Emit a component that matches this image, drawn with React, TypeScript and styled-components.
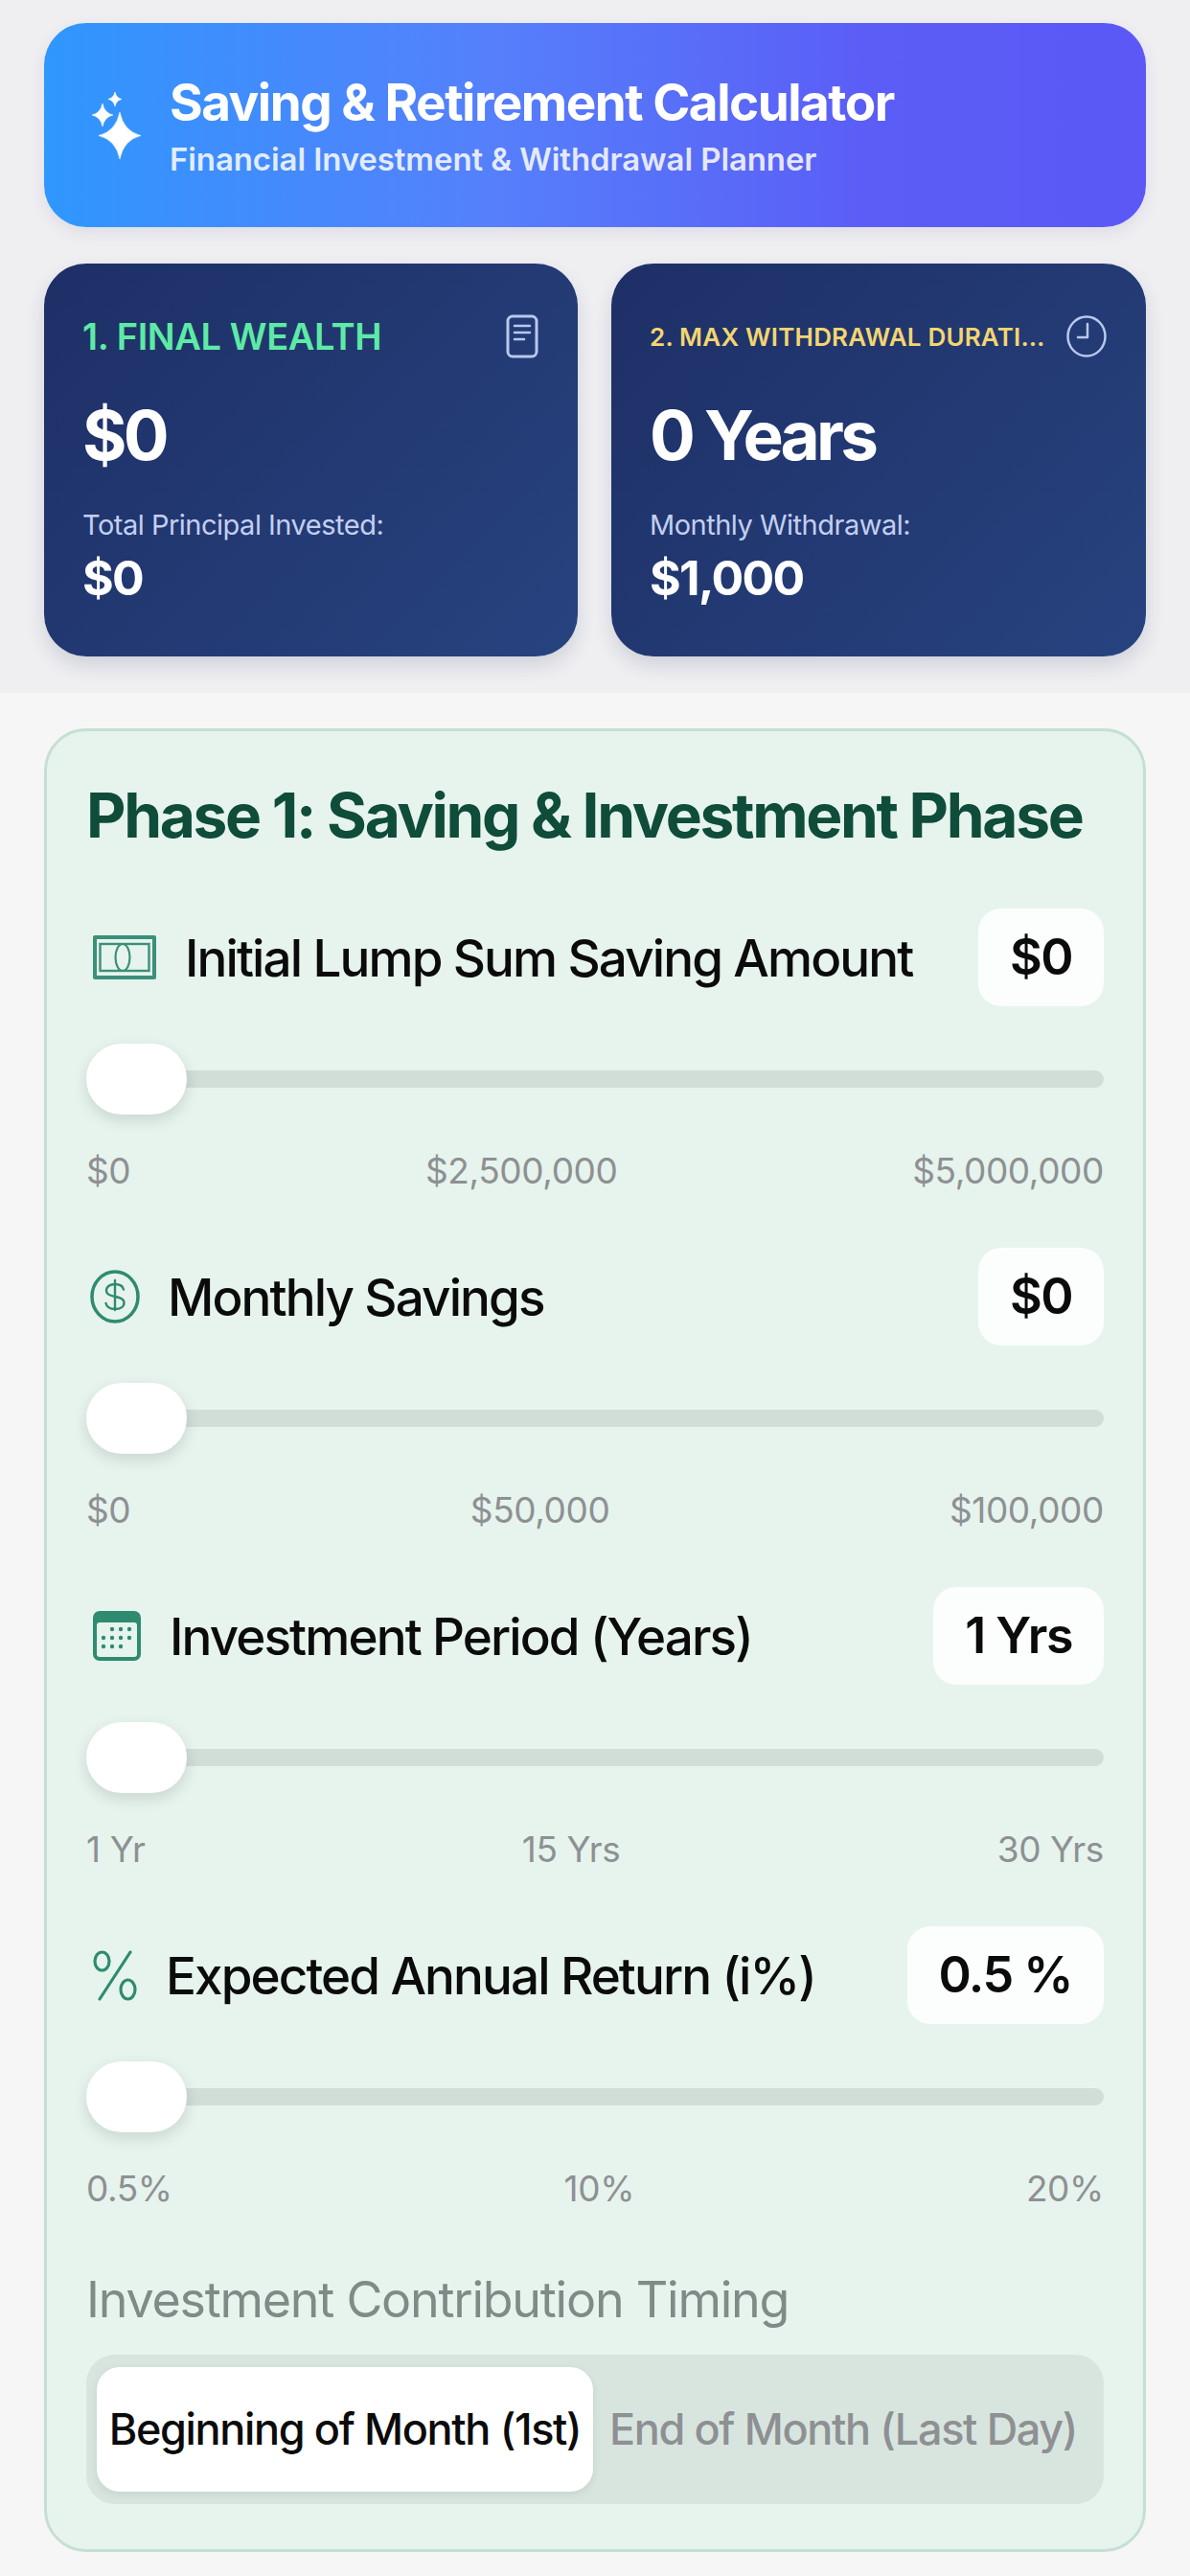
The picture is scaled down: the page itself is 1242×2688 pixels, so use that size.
import React from 'react';

import styled, { createGlobalStyle } from 'styled-components';

const GlobalStyle = createGlobalStyle`
  html, body {
    margin: 0;
    padding: 0;
    background: #f6f6f6;
    font-family: Inter, "Liberation Sans", sans-serif;
  }
  * { box-sizing: border-box; }
`;

const Page = styled.div`
  width: 1242px;
  height: 2688px;
  overflow: hidden;
`;

const Top = styled.div`
  height: 723px;
  padding: 24px 46px 0;
  background: #efeff2;
`;

const Banner = styled.div`
  display: flex;
  align-items: center;
  gap: 29px;
  height: 213px;
  padding: 0 0 0 50px;
  border-radius: 44px;
  background: linear-gradient(90deg, #2f97fd 0%, #5580fb 40%, #5b5df6 75%, #5b58f6 100%);
  box-shadow: 0 6px 16px rgba(60, 60, 120, 0.1);
`;

const BannerText = styled.div`
  display: flex;
  flex-direction: column;
  gap: 9px;
  margin-top: -1px;
`;

const BannerTitle = styled.div`
  font-size: 53px;
  line-height: 62px;
  font-weight: 700;
  letter-spacing: -1.500px;
  color: #fff;
`;

const BannerSub = styled.div`
  font-size: 33px;
  line-height: 38px;
  font-weight: 600;
  letter-spacing: -0.100px;
  color: rgba(255, 255, 255, 0.85);
`;

const Cards = styled.div`
  display: grid;
  grid-template-columns: 557px 558px;
  gap: 35px;
  margin-top: 38px;
`;

const Card = styled.div`
  height: 410px;
  padding: 52px 41px 0 40px;
  border-radius: 44px;
  background: linear-gradient(135deg, #1e2f66 0%, #27437f 100%);
  box-shadow: 0 10px 20px rgba(30, 40, 80, 0.14);
`;

const CardHead = styled.div`
  display: flex;
  align-items: center;
  justify-content: space-between;
  gap: 10px;
  height: 48px;
`;

const CardTitle = styled.div<{ $color: string; $size: number; $track: number }>`
  flex: 1;
  min-width: 0;
  overflow: hidden;
  white-space: nowrap;
  text-overflow: ellipsis;
  font-size: ${(p) => p.$size}px;
  font-weight: 600;
  letter-spacing: ${(p) => p.$track}px;
  color: ${(p) => p.$color};
`;

const CardAmount = styled.div`
  margin-top: 35px;
  font-size: 71px;
  line-height: 88px;
  font-weight: 700;
  letter-spacing: -3.800px;
  color: #fff;
`;

const CardNote = styled.div`
  margin-top: 32px;
  font-size: 29px;
  line-height: 36px;
  letter-spacing: -0.500px;
  color: #c3cff0;
`;

const CardSum = styled.div`
  margin-top: 7px;
  font-size: 50px;
  line-height: 60px;
  font-weight: 700;
  letter-spacing: -1.700px;
  color: #fff;
`;

const Panel = styled.div`
  height: 1903px;
  margin: 37px 46px 0;
  padding: 48px 41px 0;
  border: 3px solid #c6dfd3;
  border-radius: 44px;
  background: #e6f4ed;
`;

const PanelTitle = styled.div`
  font-size: 64px;
  line-height: 80px;
  font-weight: 700;
  letter-spacing: -2.300px;
  color: #0f4c3a;
  white-space: nowrap;
`;

const Fields = styled.div`
  display: flex;
  flex-direction: column;
  gap: 57px;
  margin-top: 57px;
`;

const FieldHead = styled.div`
  display: flex;
  align-items: center;
  height: 102px;
`;

const FieldIcon = styled.div<{ $width: number; $inset: number }>`
  display: flex;
  align-items: center;
  flex-shrink: 0;
  width: ${(p) => p.$width}px;
  padding-left: ${(p) => p.$inset}px;
`;

const FieldLabel = styled.div`
  flex: 1;
  padding-top: 2px;
  font-size: 53px;
  font-weight: 550;
  letter-spacing: -1.900px;
  color: #0b0b0b;
  white-space: nowrap;
`;

const ValueBox = styled.div`
  padding: 0 33px;
  height: 102px;
  line-height: 102px;
  border-radius: 24px;
  background: rgba(255, 255, 255, 0.85);
  font-size: 52px;
  font-weight: 600;
  letter-spacing: -1.500px;
  color: #0b0b0b;
`;

const Slider = styled.div`
  position: relative;
  display: flex;
  align-items: center;
  height: 74px;
  margin-top: 39px;
`;

const Track = styled.div`
  width: 100%;
  height: 18px;
  border-radius: 9px;
  background: #d1ddd7;
`;

const Thumb = styled.div`
  position: absolute;
  top: 0;
  left: 0;
  width: 105px;
  height: 74px;
  border-radius: 37px;
  background: #fff;
  box-shadow: 0 6px 16px rgba(0, 0, 0, 0.12);
`;

const Ticks = styled.div`
  display: flex;
  justify-content: space-between;
  margin-top: 36px;
  font-size: 37px;
  line-height: 46px;
  letter-spacing: -0.400px;
  color: #8e9093;
`;

const TimingLabel = styled.div`
  margin-top: 63px;
  font-size: 52px;
  line-height: 60px;
  font-weight: 400;
  letter-spacing: -1.250px;
  color: #7f8b87;
`;

const Segment = styled.div`
  display: flex;
  align-items: center;
  height: 156px;
  margin-top: 27px;
  padding: 0 11px;
  border-radius: 30px;
  background: #d8e5df;
`;

const SegmentOption = styled.div<{ $active?: boolean }>`
  flex: ${(p) => (p.$active ? '0 0 518px' : '1')};
  height: 130px;
  line-height: 130px;
  text-align: center;
  font-size: 45px;
  font-weight: 550;
  letter-spacing: -1.350px;
  white-space: nowrap;
  border-radius: 24px;
  color: ${(p) => (p.$active ? '#0b0b0b' : '#8e9093')};
  background: ${(p) => (p.$active ? '#fff' : 'transparent')};
  box-shadow: ${(p) => (p.$active ? '0 3px 8px rgba(0,0,0,0.08)' : 'none')};
`;

const Sparkles = () => (
  <svg width="52" height="70" viewBox="0 0 52 70" fill="#fff" stroke="#fff" strokeWidth="0.600" strokeLinejoin="round">
    <path d="M29 21Q33 41 51 45.500Q33 50 29 70Q25 50 7 45.500Q25 41 29 21Z" />
    <path d="M11 12Q13 22 22 24Q13 26 11 36Q9 26 0 24Q9 22 11 12Z" />
    <path d="M24 0Q25.300 6.200 31 7.500Q25.300 8.800 24 15Q22.700 8.800 17 7.500Q22.700 6.200 24 0Z" />
  </svg>
);

const DocIcon = () => (
  <svg width="34" height="46" viewBox="0 0 34 46" fill="none" stroke="#b9c8ee" strokeWidth="3" strokeLinecap="round">
    <rect x="2" y="2" width="30" height="42" rx="5" />
    <path d="M9 12h16M9 19h16M9 26h10" strokeWidth="2.500" />
  </svg>
);

const ClockIcon = () => (
  <svg width="42" height="44" viewBox="0 0 42 44" fill="none" stroke="#b9c8ee" strokeWidth="2.500" strokeLinecap="round" strokeLinejoin="round">
    <ellipse cx="21" cy="22" rx="19.500" ry="20.500" />
    <path d="M22 9v14H12" />
  </svg>
);

const BillIcon = () => (
  <svg width="66" height="46" viewBox="0 0 66 46" fill="none">
    <rect width="66" height="46" rx="2" fill="#3c8f78" />
    <rect x="4" y="4" width="58" height="38" fill="#e6f4ed" />
    <rect x="7.500" y="9" width="51" height="28" fill="#e6f4ed" stroke="#3c8f78" strokeWidth="2.400" />
    <ellipse cx="31" cy="23" rx="7.500" ry="14" stroke="#3c8f78" strokeWidth="2.200" />
  </svg>
);

const DollarIcon = () => (
  <svg width="52" height="56" viewBox="0 0 52 56" fill="none" stroke="#2e8b70" strokeWidth="3.500">
    <ellipse cx="26" cy="28" rx="24" ry="26" />
    <path
      d="M35 20.500c-1-3.500-4.500-5.500-9-5.500-5 0-9 2.500-9 6.500 0 9 18.500 4 18.500 13 0 4-4 6.500-9.500 6.500-5 0-8.500-2-9.500-6M26 11v31"
      strokeWidth="2.400"
      strokeLinecap="round"
    />
  </svg>
);

const CalendarIcon = () => (
  <svg width="50" height="52" viewBox="0 0 50 52" fill="none">
    <rect width="50" height="52" rx="7" fill="#2e8b70" />
    <rect x="4" y="12" width="42" height="36" rx="3" fill="#e6f4ed" />
    <g fill="#2e8b70">
      {[
        [20, 19], [29, 19], [38, 19],
        [11, 28], [20, 28], [29, 28], [38, 28],
        [11, 37], [20, 37], [29, 37],
      ].map(([cx, cy]) => (
        <circle key={`${cx}-${cy}`} cx={cx} cy={cy} r="2.200" />
      ))}
    </g>
  </svg>
);

const PercentIcon = () => (
  <svg width="46" height="53" viewBox="0 0 46 53" fill="none" stroke="#2e8b70" strokeWidth="3.200" strokeLinecap="round">
    <ellipse cx="9.500" cy="11.500" rx="7.500" ry="9.500" />
    <ellipse cx="36.500" cy="41" rx="7.500" ry="10" />
    <path d="M39 2L7 51" />
  </svg>
);

type FieldData = {
  icon: React.ReactNode;
  iconWidth: number;
  iconInset: number;
  label: string;
  value: string;
  ticks: string[];
};

const fields: FieldData[] = [
  { icon: <BillIcon />, iconWidth: 103, iconInset: 7, label: 'Initial Lump Sum Saving Amount', value: '$0', ticks: ['$0', '$2,500,000', '$5,000,000'] },
  { icon: <DollarIcon />, iconWidth: 85, iconInset: 4, label: 'Monthly Savings', value: '$0', ticks: ['$0', '$50,000', '$100,000'] },
  { icon: <CalendarIcon />, iconWidth: 87, iconInset: 7, label: 'Investment Period (Years)', value: '1 Yrs', ticks: ['1 Yr', '15 Yrs', '30 Yrs'] },
  { icon: <PercentIcon />, iconWidth: 83, iconInset: 7, label: 'Expected Annual Return (i%)', value: '0.5 %', ticks: ['0.5%', '10%', '20%'] },
];

const App: React.FC = () => {
  return (
    <Page>
      <GlobalStyle />
      <Top>
        <Banner>
          <Sparkles />
          <BannerText>
            <BannerTitle>Saving &amp; Retirement Calculator</BannerTitle>
            <BannerSub>Financial Investment &amp; Withdrawal Planner</BannerSub>
          </BannerText>
        </Banner>
        <Cards>
          <Card>
            <CardHead>
              <CardTitle $color="#5eeaa5" $size={38} $track={-0.4}>1. FINAL WEALTH</CardTitle>
              <DocIcon />
            </CardHead>
            <CardAmount>$0</CardAmount>
            <CardNote>Total Principal Invested:</CardNote>
            <CardSum>$0</CardSum>
          </Card>
          <Card>
            <CardHead>
              <CardTitle $color="#f3d670" $size={26} $track={0.2}>2. MAX WITHDRAWAL DURATION</CardTitle>
              <ClockIcon />
            </CardHead>
            <CardAmount>0 Years</CardAmount>
            <CardNote>Monthly Withdrawal:</CardNote>
            <CardSum>$1,000</CardSum>
          </Card>
        </Cards>
      </Top>
      <Panel>
        <PanelTitle>Phase 1: Saving &amp; Investment Phase</PanelTitle>
        <Fields>
          {fields.map((field) => (
            <div key={field.label}>
              <FieldHead>
                <FieldIcon $width={field.iconWidth} $inset={field.iconInset}>{field.icon}</FieldIcon>
                <FieldLabel>{field.label}</FieldLabel>
                <ValueBox>{field.value}</ValueBox>
              </FieldHead>
              <Slider>
                <Track />
                <Thumb />
              </Slider>
              <Ticks>
                {field.ticks.map((tick) => (
                  <span key={tick}>{tick}</span>
                ))}
              </Ticks>
            </div>
          ))}
        </Fields>
        <TimingLabel>Investment Contribution Timing</TimingLabel>
        <Segment>
          <SegmentOption $active>Beginning of Month (1st)</SegmentOption>
          <SegmentOption>End of Month (Last Day)</SegmentOption>
        </Segment>
      </Panel>
    </Page>
  );
};

export default App;
